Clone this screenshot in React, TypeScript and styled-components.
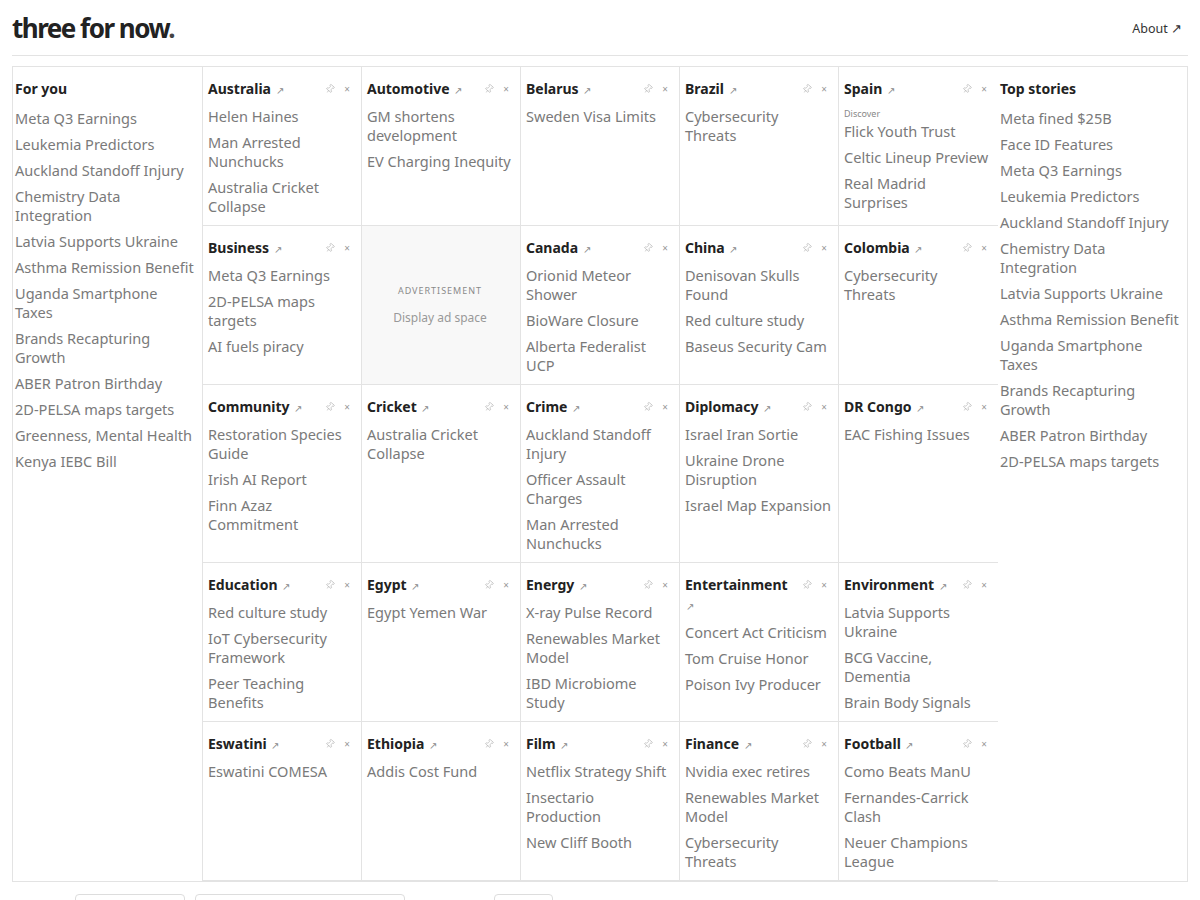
import React from 'react';
import styled, { createGlobalStyle } from 'styled-components';
import { Pin } from 'lucide-react';

const GlobalStyle = createGlobalStyle`
  html, body {
    margin: 0;
    padding: 0;
    background: #ffffff;
  }

  body {
    font-family: 'Noto Sans', 'Open Sans', sans-serif;
    color: #222222;
  }
`;

const Page = styled.div`
  padding: 0 12px;
`;

const Header = styled.header`
  display: flex;
  align-items: center;
  justify-content: space-between;
  height: 55px;
  border-bottom: 1px solid #e3e3e3;
`;

const Logo = styled.h1`
  margin: 0;
  font-size: 26px;
  font-weight: 700;
  letter-spacing: -1.5px;
  color: #222222;

  span {
    color: #444444;
  }
`;

const AboutLink = styled.a`
  margin: 2px 6px 0 0;
  font-size: 12.5px;
  color: #333333;
  text-decoration: none;
`;

const Board = styled.main`
  display: grid;
  grid-template-columns: 189px 796px 1fr;
  margin-top: 10px;
  border: 1px solid #e3e3e3;
`;

const Sidebar = styled.section`
  padding: 12px 6px 10px 2px;
`;

const SideTitle = styled.h2`
  margin: 0;
  font-size: 14px;
  line-height: 20px;
  font-weight: 700;
  color: #222222;
`;

const SideList = styled.ul`
  list-style: none;
  margin: 10px 0 0;
  padding: 0;
`;

const Story = styled.li`
  font-size: 14.56px;
  line-height: 19px;
  color: #7a7a7a;

  & + & {
    margin-top: 7px;
  }
`;

const CategoryGrid = styled.div`
  display: grid;
  grid-template-columns: repeat(5, 159px);
  align-content: start;
  border-left: 1px solid #e3e3e3;
  border-right: 1px solid #e3e3e3;
`;

const Cell = styled.article`
  box-sizing: border-box;
  padding: 12px 7px 9px 5px;
  border-right: 1px solid #e3e3e3;
  border-bottom: 1px solid #e3e3e3;
  background: #ffffff;

  &:nth-child(5n) {
    border-right: none;
  }
`;

const AdCell = styled(Cell)`
  display: flex;
  flex-direction: column;
  align-items: center;
  justify-content: center;
  padding: 11px 7px 11px 5px;
  background: #f8f8f8;
`;

const CellHead = styled.div`
  display: flex;
  align-items: flex-start;
`;

const CellTitle = styled.h3`
  flex: 1;
  margin: 0;
  font-size: 14px;
  line-height: 20px;
  font-weight: 700;
  color: #222222;
`;

const Arrow = styled.span`
  margin-left: 1px;
  font-size: 10px;
  font-weight: 400;
  color: #888888;
`;

const Actions = styled.div`
  display: flex;
  align-items: center;
  gap: 9px;
  height: 20px;
  margin: 0 4px 0 8px;
  color: #b5b5b5;
`;

const CloseMark = styled.span`
  font-size: 10px;
  line-height: 1;
  color: #999999;
`;

const Kicker = styled.div`
  margin-top: 8px;
  font-size: 9px;
  line-height: 12px;
  color: #888888;
`;

const CellList = styled.ul<{ $tight?: boolean }>`
  list-style: none;
  margin: ${(p) => (p.$tight ? '2px' : '7px')} 0 0;
  padding: 0;
`;

const AdLabel = styled.div`
  font-size: 9px;
  letter-spacing: 1px;
  color: #8a8a8a;
`;

const AdText = styled.div`
  margin-top: 12px;
  font-size: 12px;
  color: #999999;
`;

const Footer = styled.footer`
  display: flex;
  align-items: flex-start;
  gap: 10px;
  margin-top: 12px;
  padding-left: 63px;
`;

const Control = styled.div<{ $w: number; $gap?: number }>`
  width: ${(p) => p.$w}px;
  height: 30px;
  margin-left: ${(p) => p.$gap ?? 0}px;
  border: 1px solid #dddddd;
  border-radius: 4px;
  box-sizing: border-box;
`;

type Category = {
  name: string;
  kicker?: string;
  stories: string[];
};

const forYou = [
  'Meta Q3 Earnings',
  'Leukemia Predictors',
  'Auckland Standoff Injury',
  'Chemistry Data Integration',
  'Latvia Supports Ukraine',
  'Asthma Remission Benefit',
  'Uganda Smartphone Taxes',
  'Brands Recapturing Growth',
  'ABER Patron Birthday',
  '2D-PELSA maps targets',
  'Greenness, Mental Health',
  'Kenya IEBC Bill',
];

const topStories = [
  'Meta fined $25B',
  'Face ID Features',
  'Meta Q3 Earnings',
  'Leukemia Predictors',
  'Auckland Standoff Injury',
  'Chemistry Data Integration',
  'Latvia Supports Ukraine',
  'Asthma Remission Benefit',
  'Uganda Smartphone Taxes',
  'Brands Recapturing Growth',
  'ABER Patron Birthday',
  '2D-PELSA maps targets',
];

// null marks the ad slot
const categories: (Category | null)[] = [
  { name: 'Australia', stories: ['Helen Haines', 'Man Arrested Nunchucks', 'Australia Cricket Collapse'] },
  { name: 'Automotive', stories: ['GM shortens development', 'EV Charging Inequity'] },
  { name: 'Belarus', stories: ['Sweden Visa Limits'] },
  { name: 'Brazil', stories: ['Cybersecurity Threats'] },
  { name: 'Spain', kicker: 'Discover', stories: ['Flick Youth Trust', 'Celtic Lineup Preview', 'Real Madrid Surprises'] },
  { name: 'Business', stories: ['Meta Q3 Earnings', '2D-PELSA maps targets', 'AI fuels piracy'] },
  null,
  { name: 'Canada', stories: ['Orionid Meteor Shower', 'BioWare Closure', 'Alberta Federalist UCP'] },
  { name: 'China', stories: ['Denisovan Skulls Found', 'Red culture study', 'Baseus Security Cam'] },
  { name: 'Colombia', stories: ['Cybersecurity Threats'] },
  { name: 'Community', stories: ['Restoration Species Guide', 'Irish AI Report', 'Finn Azaz Commitment'] },
  { name: 'Cricket', stories: ['Australia Cricket Collapse'] },
  { name: 'Crime', stories: ['Auckland Standoff Injury', 'Officer Assault Charges', 'Man Arrested Nunchucks'] },
  { name: 'Diplomacy', stories: ['Israel Iran Sortie', 'Ukraine Drone Disruption', 'Israel Map Expansion'] },
  { name: 'DR Congo', stories: ['EAC Fishing Issues'] },
  { name: 'Education', stories: ['Red culture study', 'IoT Cybersecurity Framework', 'Peer Teaching Benefits'] },
  { name: 'Egypt', stories: ['Egypt Yemen War'] },
  { name: 'Energy', stories: ['X-ray Pulse Record', 'Renewables Market Model', 'IBD Microbiome Study'] },
  { name: 'Entertainment', stories: ['Concert Act Criticism', 'Tom Cruise Honor', 'Poison Ivy Producer'] },
  { name: 'Environment', stories: ['Latvia Supports Ukraine', 'BCG Vaccine, Dementia', 'Brain Body Signals'] },
  { name: 'Eswatini', stories: ['Eswatini COMESA'] },
  { name: 'Ethiopia', stories: ['Addis Cost Fund'] },
  { name: 'Film', stories: ['Netflix Strategy Shift', 'Insectario Production', 'New Cliff Booth'] },
  { name: 'Finance', stories: ['Nvidia exec retires', 'Renewables Market Model', 'Cybersecurity Threats'] },
  { name: 'Football', stories: ['Como Beats ManU', 'Fernandes-Carrick Clash', 'Neuer Champions League'] },
];

function CategoryCell({ category }: { category: Category }) {
  return (
    <Cell>
      <CellHead>
        <CellTitle>
          {category.name} <Arrow>↗</Arrow>
        </CellTitle>
        <Actions>
          <Pin size={10} strokeWidth={1.6} style={{ transform: 'rotate(40deg)' }} />
          <CloseMark>×</CloseMark>
        </Actions>
      </CellHead>
      {category.kicker && <Kicker>{category.kicker}</Kicker>}
      <CellList $tight={!!category.kicker}>
        {category.stories.map((s) => (
          <Story key={s}>{s}</Story>
        ))}
      </CellList>
    </Cell>
  );
}

function StoryColumn({ title, stories }: { title: string; stories: string[] }) {
  return (
    <Sidebar>
      <SideTitle>{title}</SideTitle>
      <SideList>
        {stories.map((s) => (
          <Story key={s}>{s}</Story>
        ))}
      </SideList>
    </Sidebar>
  );
}

export default function App() {
  return (
    <Page>
      <GlobalStyle />
      <Header>
        <Logo>
          three for now<span>.</span>
        </Logo>
        <AboutLink href="#">About ↗</AboutLink>
      </Header>
      <Board>
        <StoryColumn title="For you" stories={forYou} />
        <CategoryGrid>
          {categories.map((c, i) =>
            c ? (
              <CategoryCell key={c.name} category={c} />
            ) : (
              <AdCell key={`ad-${i}`}>
                <AdLabel>ADVERTISEMENT</AdLabel>
                <AdText>Display ad space</AdText>
              </AdCell>
            )
          )}
        </CategoryGrid>
        <StoryColumn title="Top stories" stories={topStories} />
      </Board>
      <Footer>
        <Control $w={110} />
        <Control $w={210} />
        <Control $w={59} $gap={79} />
      </Footer>
    </Page>
  );
}
